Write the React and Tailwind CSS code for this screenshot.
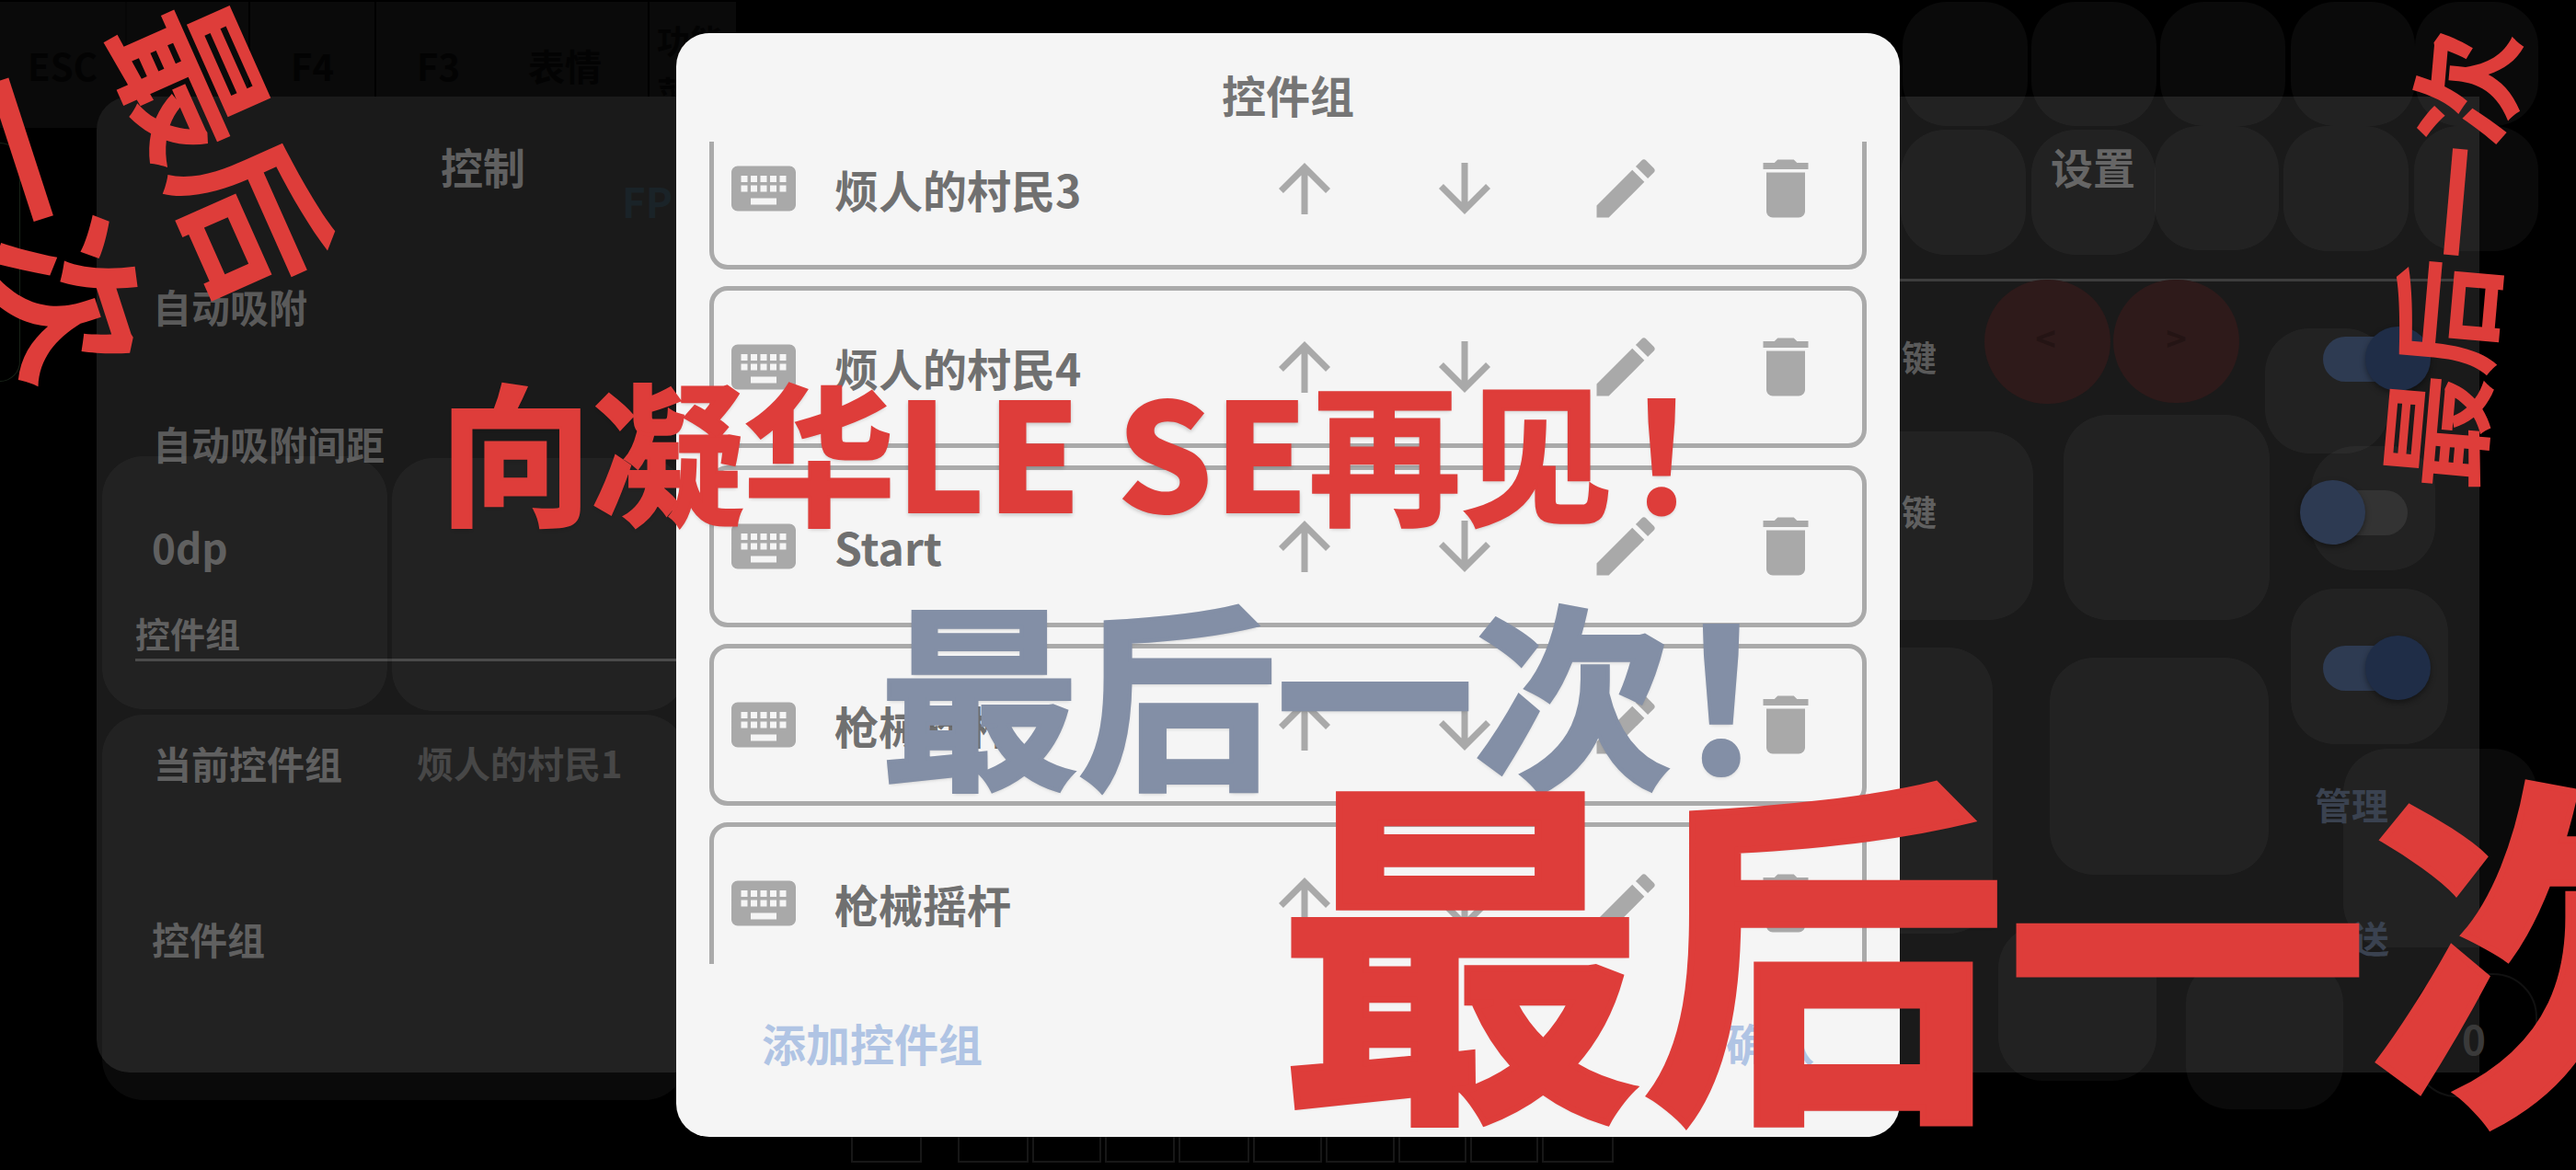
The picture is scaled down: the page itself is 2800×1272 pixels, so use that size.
import React from 'react'
import { MdKeyboard, MdArrowUpward, MdArrowDownward, MdEdit, MdDelete } from 'react-icons/md'

const cjk = "font-['Noto_Sans_CJK_SC',sans-serif]"

// game buttons behind the dialog, these sit on a free canvas
const keys = [
    'left-[2068px] top-[2px] w-[136px] h-[135px]',
    'left-[2208px] top-[2px] w-[136px] h-[135px]',
    'left-[2348px] top-[2px] w-[136px] h-[135px]',
    'left-[2490px] top-[2px] w-[135px] h-[135px]',
    'left-[2625px] top-[2px] w-[134px] h-[135px]',
    'left-[2066px] top-[141px] w-[136px] h-[136px]',
    'left-[2208px] top-[141px] w-[135px] h-[136px]',
    'left-[2342px] top-[137px] w-[135px] h-[135px]',
    'left-[2482px] top-[137px] w-[136px] h-[136px]',
    'left-[2624px] top-[137px] w-[135px] h-[136px]',
    'left-[2462px] top-[357px] w-[135px] h-[136px]',
    'left-[2512px] top-[485px] w-[135px] h-[135px]',
    'left-[1980px] top-[469px] w-[230px] h-[205px]',
    'left-[2243px] top-[451px] w-[224px] h-[223px]',
    'left-[2490px] top-[640px] w-[171px] h-[169px]',
    'left-[1980px] top-[704px] w-[186px] h-[311px]',
    'left-[2228px] top-[715px] w-[238px] h-[236px]',
    'left-[2547px] top-[814px] w-[211px] h-[216px]',
    'left-[2172px] top-[1005px] w-[172px] h-[170px]',
    'left-[2376px] top-[1043px] w-[171px] h-[163px]',
]

const bottomKeys = ['w-[77px] mr-[35px]', 'w-[77px]', 'w-[75px]', 'w-[76px]', 'w-[77px]', 'w-[75px]', 'w-[75px]', 'w-[74px]', 'w-[74px]', 'w-[78px]']

const groups = ['烦人的村民3', '烦人的村民4', 'Start', '枪械摇杆', '枪械摇杆']

function GroupRow({ name }) {
    return (
        <div className="h-[176px] shrink-0 flex items-center pl-[12px] border-[5px] border-[#aaaaaa] rounded-[20px]">
            <MdKeyboard size={84} color="#a9a9a9" />
            <span className="ml-[35px] flex-1 text-[48px] font-bold text-[#707070] leading-none">{name}</span>
            <div className="flex gap-[90.5px] mr-[41px]">
                <MdArrowUpward size={84} color="#a9a9a9" />
                <MdArrowDownward size={84} color="#a9a9a9" />
                <MdEdit size={84} color="#a9a9a9" />
                <MdDelete size={84} color="#a9a9a9" />
            </div>
        </div>
    )
}

function Toggle({ on, className }) {
    return (
        <div className={`absolute w-[117px] h-[70px] flex items-center ${className}`}>
            <div className={`absolute h-[49px] rounded-full ${on ? 'left-0 right-[22px] bg-[#2e3b52]' : 'left-[8px] right-0 bg-[#333333]'}`}></div>
            <div className={`absolute w-[71px] h-[70px] rounded-full shadow-[0_3px_6px_rgba(0,0,0,0.4)] ${on ? 'right-0 bg-[#1f2d47]' : 'left-0 bg-[#2d3a52]'}`}></div>
        </div>
    )
}

function App() {
    return (
        <div className={`relative w-[2800px] h-[1272px] overflow-hidden bg-black ${cjk}`}>
            {/* key strip along the top */}
            <div className="w-[800px] h-[137px] mt-[2px] flex items-center bg-[#0a0a0a] text-[#030303] text-[40px] font-bold">
                <div className="w-[136px] h-full flex items-center justify-center">ESC</div>
                <div className="w-[134px] h-full border-l-2 border-[#070707]"></div>
                <div className="w-[137px] h-full flex items-center justify-center border-l-2 border-black">F4</div>
                <div className="w-[137px] h-full flex items-center justify-center border-l-2 border-black">F3</div>
                <div className="w-[160px] h-full flex items-center justify-center pr-[20px]">表情</div>
                <div className="w-[96px] h-full flex items-center pl-[8px] text-[36px] leading-[56px] border-l-2 border-black">功能菜单</div>
            </div>

            <div className="absolute left-0 top-[155px] w-[22px] h-[260px] border-r border-y border-[#172217] rounded-r-[24px]"></div>

            {/* settings panels */}
            <div className="absolute left-[105px] right-[105px] top-[105px] h-[1061px] flex justify-between">
                <div className="relative w-[840px] h-full bg-[#1a1a1a] rounded-[36px] text-[#5a5a5a] font-bold">
                    <div className="mt-[47px] text-center text-[46px] text-[#606060] leading-[56px]">控制</div>
                    <div className="absolute left-[571px] top-[88px] text-[44px] text-[#1a2328] leading-[50px]">FP</div>
                    <div className="ml-[61px] mt-[100px] text-[42px] leading-[50px]">自动吸附</div>
                    <div className="ml-[61px] mt-[99px] text-[42px] leading-[50px]">自动吸附间距</div>
                    <div className="ml-[60px] mt-[59px] text-[44px] leading-[56px]">0dp</div>
                    <div className="ml-[42px] mt-[42px] text-[38px] leading-[48px] border-b-[3px] border-[#444444] pb-[4px]">控件组</div>
                    <div className="ml-[62px] mt-[85px] flex text-[41px] leading-[50px]">
                        <span className="w-[286px]">当前控件组</span>
                        <span className="text-[40px] text-[#404040]">烦人的村民1</span>
                    </div>
                    <div className="ml-[60px] mt-[141px] text-[41px] leading-[50px]">控件组</div>
                </div>
                <div className="relative w-[840px] h-full bg-[#1a1a1a] rounded-l-[36px] text-[#5a5a5a] font-bold">
                    <div className="mt-[47px] text-center text-[46px] text-[#606060] leading-[56px]">设置</div>
                    <div className="mt-[95px] h-[3px] mr-[5px] bg-[#3d3d3d]"></div>
                    <div className="ml-[212px] mt-[57px] text-[38px] leading-[48px]">键</div>
                    <div className="ml-[212px] mt-[120px] text-[38px] leading-[48px]">键</div>
                </div>
            </div>

            {/* translucent buttons over the panels */}
            <div className="absolute left-[111px] top-[496px] w-[310px] h-[275px] rounded-[45px] bg-white/[0.04]"></div>
            <div className="absolute left-[426px] top-[498px] w-[320px] h-[275px] rounded-[45px] bg-white/[0.04]"></div>
            <div className="absolute left-[111px] top-[777px] w-[635px] h-[419px] rounded-[45px] bg-white/[0.04]"></div>
            {keys.map((k) => (
                <div key={k} className={`absolute rounded-[48px] bg-white/[0.04] ${k}`}></div>
            ))}

            {/* red round keys */}
            <div className="absolute left-[2157px] top-[304px] w-[137px] h-[135px] rounded-full bg-[#2e1a1a] flex items-center justify-center text-[38px] font-bold text-[#241414] pb-[10px] pr-[4px]">&lt;</div>
            <div className="absolute left-[2297px] top-[304px] w-[137px] h-[134px] rounded-full bg-[#2e1a1a] flex items-center justify-center text-[38px] font-bold text-[#241414] pb-[10px]">&gt;</div>

            <Toggle on className="left-[2525px] top-[355px]" />
            <Toggle className="left-[2500px] top-[522px]" />
            <Toggle on className="left-[2525px] top-[691px]" />

            <div className="absolute left-[2516px] top-[849px] text-[40px] font-bold text-[#3a4250] leading-[50px]">管理</div>
            <div className="absolute left-[2557px] top-[994px] text-[40px] font-bold text-[#3a4250] leading-[50px]">送</div>
            <div className="absolute left-[2623px] top-[1058px] w-[135px] h-[135px] rounded-[48px] border-2 border-[#111111]"></div>
            <div className="absolute left-[2676px] top-[1100px] text-[44px] font-bold text-[#3a3a3a] leading-[56px]">0</div>

            {/* hotbar peeking out below the dialog */}
            <div className="absolute left-[925px] top-[1236px] flex gap-[4px]">
                {bottomKeys.map((w, i) => (
                    <div key={i} className={`h-[28px] border-2 border-t-0 border-[#171717] ${w}`}></div>
                ))}
            </div>

            {/* dialog */}
            <div className="absolute inset-0 flex items-center justify-center">
                <div className="w-[1330px] h-[1200px] flex flex-col bg-[#f5f5f5] rounded-[36px]">
                    <div className="pt-[37px] h-[118px] text-center text-[48px] font-bold text-[#757575] leading-[58px]">控件组</div>
                    <div className="mx-[36px] h-[894px] overflow-hidden">
                        <div className="-mt-[37px] flex flex-col gap-[18.25px]">
                            {groups.map((g, i) => (
                                <GroupRow key={i} name={g} />
                            ))}
                        </div>
                    </div>
                    <div className="flex-1 flex items-center justify-between px-[93px] text-[48px] font-bold text-[#b0c4e4] leading-none pb-[18px]">
                        <span>添加控件组</span>
                        <span>确认</span>
                    </div>
                </div>
            </div>

            {/* banner text on top of everything */}
            <div className="absolute left-[478px] top-[404px] whitespace-nowrap text-[165px] font-bold leading-none text-[#de3d3a] [-webkit-text-stroke:3px_#de3d3a] [text-shadow:0_2px_4px_rgba(0,0,0,0.2)]">
                向凝华<span className="font-black [-webkit-text-stroke:0]">LE SE</span>再见<span className="ml-[12px]">！</span>
            </div>
            <div className="absolute left-[957px] top-[640px] whitespace-nowrap text-[215px] font-bold leading-none text-[#838fa6] [-webkit-text-stroke:4px_#838fa6] [text-shadow:0_2px_4px_rgba(0,0,0,0.2)]">最后一次！</div>
            <div className="absolute left-[1390px] top-[818px] whitespace-nowrap text-[395px] font-bold leading-none text-[#de3d3a] [-webkit-text-stroke:7px_#de3d3a] [text-shadow:0_2px_4px_rgba(0,0,0,0.2)]">最后一次</div>
            <div className="absolute left-[256px] top-[-27px] whitespace-nowrap text-[165px] font-bold leading-none text-[#de3d3a] rotate-[66deg] origin-top-left">最后</div>
            <div className="absolute left-[85px] top-[53px] whitespace-nowrap text-[170px] font-bold leading-none text-[#de3d3a] rotate-[72deg] origin-top-left">一次</div>
            <div className="absolute left-[2574px] top-[525px] whitespace-nowrap text-[125px] font-bold leading-none text-[#de3d3a] -rotate-[85deg] origin-top-left">最后一次</div>
        </div>
    )
}

export default App
